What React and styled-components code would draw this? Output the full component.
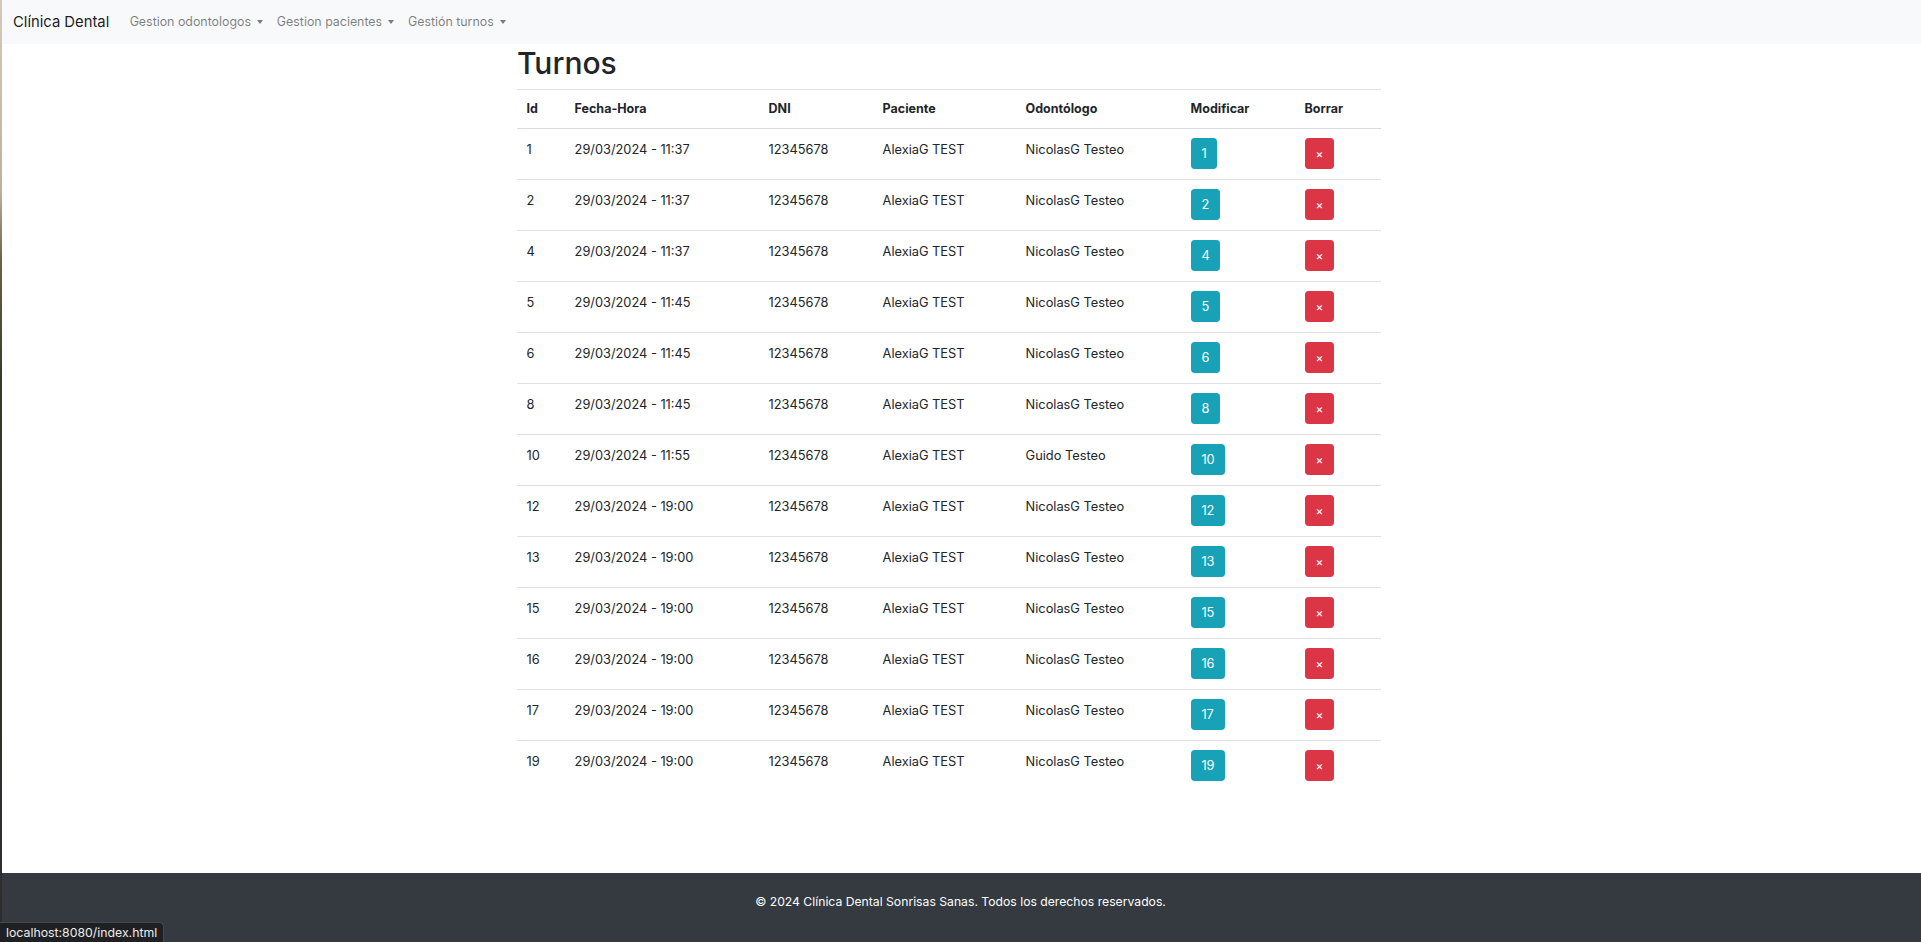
import React from "react";
import styled, { createGlobalStyle } from "styled-components";

const GlobalStyle = createGlobalStyle`
  *, *::before, *::after { box-sizing: border-box; }
  html, body { margin: 0; padding: 0; }
  body {
    font-family: Inter, "Liberation Sans", Arial, sans-serif;
    font-size: 12.8px;
    line-height: 1.5;
    color: #212529;
    background: #fff;
  }
  body::before {
    content: "";
    position: fixed;
    left: 0;
    top: 0;
    width: 2px;
    height: 100%;
    z-index: 10;
    background: linear-gradient(#d2cabd 0, #bdb29f 190px, #6a6448 260px, #363a2c 380px, #2b2e2b 100%);
  }
`;

const Page = styled.div`
  min-height: 100vh;
  display: flex;
  flex-direction: column;
`;

const Navbar = styled.nav`
  height: 44px;
  background: #f8f9fa;
  display: flex;
  align-items: center;
  padding: 0 12.8px 0 13px;
`;

const Brand = styled.a`
  font-size: 14.8px;
  line-height: 24px;
  color: rgba(0, 0, 0, 0.9);
  margin-right: 14px;
  text-decoration: none;
  white-space: nowrap;
`;

const NavList = styled.ul`
  display: flex;
  list-style: none;
  margin: 0;
  padding: 0;
`;

const NavLink = styled.a`
  display: flex;
  align-items: center;
  padding: 6.4px 7.4px 6.4px 6.4px;
  font-size: 12.4px;
  color: rgba(0, 0, 0, 0.5);
  text-decoration: none;
  white-space: nowrap;
  &::after {
    content: "";
    margin-left: 6px;
    margin-top: 1px;
    border-top: 4px solid;
    border-right: 3.5px solid transparent;
    border-left: 3.5px solid transparent;
  }
`;

const Main = styled.main`
  flex: 1;
`;

const Container = styled.div`
  width: 864px;
  margin-left: calc(50% - 443.5px);
`;

const Title = styled.h1`
  margin: 0 0 6.4px;
  font-size: 30px;
  font-weight: 500;
  line-height: 38.4px;
`;

const Table = styled.table`
  width: 100%;
  border-collapse: collapse;
  table-layout: fixed;
  margin-bottom: 12.8px;
`;

const Th = styled.th`
  width: ${(p) => p.$w}px;
  text-align: left;
  font-weight: 700;
  font-size: 12.5px;
  padding: 10.6px 9.6px 8.6px;
  vertical-align: bottom;
  border-top: 1px solid #dee2e6;
  border-bottom: 1px solid #d8dce0;
`;

const Td = styled.td`
  padding: ${(p) => (p.$button ? "9.6px" : "11px 9.6px 8.2px")};
  vertical-align: top;
  border-top: 1px solid #dee2e6;
`;

const Button = styled.button`
  display: inline-block;
  vertical-align: top;
  font-family: inherit;
  font-size: ${(p) => (p.$variant === "danger" ? "12px" : "12.8px")};
  line-height: 19.2px;
  padding: 4.8px 9.8px;
  border: 0.8px solid ${(p) => (p.$variant === "danger" ? "#dc3545" : "#17a2b8")};
  border-radius: 3.2px;
  color: #fff;
  background: ${(p) => (p.$variant === "danger" ? "#dc3545" : "#17a2b8")};
  cursor: pointer;
`;

const Footer = styled.footer`
  background: #343a40;
  color: #fff;
  text-align: center;
  padding: 19px 0 31px;
`;

const FooterText = styled.p`
  margin: 0;
  font-size: 12.2px;
  line-height: 19px;
`;

const StatusBar = styled.div`
  position: fixed;
  left: 0;
  bottom: 0;
  height: 20px;
  padding: 0 6px;
  background: #1f2023;
  border-top: 1px solid #47484c;
  border-right: 1px solid #47484c;
  border-top-right-radius: 5px;
  color: #ececec;
  font-size: 12.3px;
  line-height: 19px;
  z-index: 20;
`;

const columns = [
  { label: "Id", w: 48 },
  { label: "Fecha-Hora", w: 194 },
  { label: "DNI", w: 114 },
  { label: "Paciente", w: 143 },
  { label: "Odontólogo", w: 165 },
  { label: "Modificar", w: 114 },
  { label: "Borrar", w: 86 },
];

const turnos = [
  [1, "11:37", "NicolasG Testeo"],
  [2, "11:37", "NicolasG Testeo"],
  [4, "11:37", "NicolasG Testeo"],
  [5, "11:45", "NicolasG Testeo"],
  [6, "11:45", "NicolasG Testeo"],
  [8, "11:45", "NicolasG Testeo"],
  [10, "11:55", "Guido Testeo"],
  [12, "19:00", "NicolasG Testeo"],
  [13, "19:00", "NicolasG Testeo"],
  [15, "19:00", "NicolasG Testeo"],
  [16, "19:00", "NicolasG Testeo"],
  [17, "19:00", "NicolasG Testeo"],
  [19, "19:00", "NicolasG Testeo"],
];

export default function App() {
  return (
    <>
      <GlobalStyle />
      <Page>
        <Navbar>
          <Brand href="#">Clínica Dental</Brand>
          <NavList>
            <li><NavLink href="#">Gestion odontologos</NavLink></li>
            <li><NavLink href="#">Gestion pacientes</NavLink></li>
            <li><NavLink href="#">Gestión turnos</NavLink></li>
          </NavList>
        </Navbar>
        <Main>
          <Container>
            <Title>Turnos</Title>
            <Table>
              <thead>
                <tr>
                  {columns.map((c) => (
                    <Th key={c.label} $w={c.w}>{c.label}</Th>
                  ))}
                </tr>
              </thead>
              <tbody>
                {turnos.map(([id, hora, odontologo]) => (
                  <tr key={id}>
                    <Td>{id}</Td>
                    <Td>29/03/2024 - {hora}</Td>
                    <Td>12345678</Td>
                    <Td>AlexiaG TEST</Td>
                    <Td>{odontologo}</Td>
                    <Td $button><Button $variant="info">{id}</Button></Td>
                    <Td $button><Button $variant="danger">×</Button></Td>
                  </tr>
                ))}
              </tbody>
            </Table>
          </Container>
        </Main>
        <Footer>
          <FooterText>© 2024 Clínica Dental Sonrisas Sanas. Todos los derechos reservados.</FooterText>
        </Footer>
      </Page>
      <StatusBar>localhost:8080/index.html</StatusBar>
    </>
  );
}
